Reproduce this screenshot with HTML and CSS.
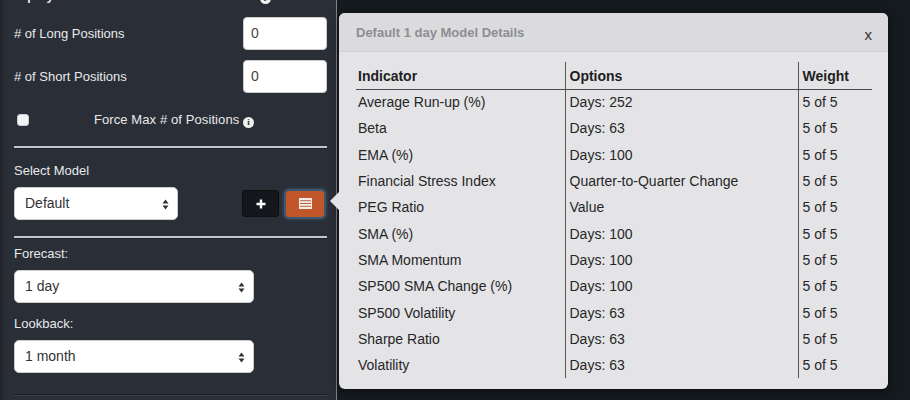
FILE: index.html
```html
<!DOCTYPE html>
<html>
<head>
<meta charset="utf-8">
<link rel="stylesheet" href="styles.css">
</head>
<body>
<div class="page">
  <aside class="sidebar">
    <div class="title">Equity Selection from Forecast Results <span class="info dark">i</span></div>
    <div class="row first">
      <label class="lbl">#&nbsp;of Long Positions</label>
      <div class="num">0</div>
    </div>
    <div class="row second">
      <label class="lbl">#&nbsp;of Short Positions</label>
      <div class="num">0</div>
    </div>
    <div class="check-row">
      <span class="checkbox"></span>
      <span class="check-text">Force Max # of Positions <span class="info">i</span></span>
    </div>
    <div class="rule"></div>
    <div class="lbl block">Select Model</div>
    <div class="model-row">
      <div class="select short">Default<svg class="caret" width="7" height="11" viewBox="0 0 7 11"><path d="M3.5 0.5 L6.5 4.5 H0.5 Z M3.5 10.5 L6.5 6.5 H0.5 Z" fill="#333"/></svg></div>
      <div class="btns">
        <button class="btn btn-dark"><svg width="10" height="10" viewBox="0 0 10 10"><path d="M3.8 0.5 H6.2 V3.8 H9.5 V6.2 H6.2 V9.5 H3.8 V6.2 H0.5 V3.8 H3.8 Z" fill="#fff"/></svg></button>
        <button class="btn btn-orange"><svg width="13" height="11" viewBox="0 0 13 11"><rect x="0" y="0" width="13" height="11" fill="#f6ede6"/><rect x="1" y="2.2" width="11" height="1" fill="#b9643e"/><rect x="1" y="5" width="11" height="1" fill="#b9643e"/><rect x="1" y="7.8" width="11" height="1" fill="#b9643e"/></svg></button>
      </div>
    </div>
    <div class="rule second-rule"></div>
    <div class="lbl block forecast">Forecast:</div>
    <div class="select wide">1 day<svg class="caret" width="7" height="11" viewBox="0 0 7 11"><path d="M3.5 0.5 L6.5 4.5 H0.5 Z M3.5 10.5 L6.5 6.5 H0.5 Z" fill="#333"/></svg></div>
    <div class="lbl block lookback">Lookback:</div>
    <div class="select wide">1 month<svg class="caret" width="7" height="11" viewBox="0 0 7 11"><path d="M3.5 0.5 L6.5 4.5 H0.5 Z M3.5 10.5 L6.5 6.5 H0.5 Z" fill="#333"/></svg></div>
    <div class="bottom-rule"></div>
  </aside>

  <div class="popover">
    <div class="pop-head">
      <span class="pop-title">Default 1 day Model Details</span>
      <span class="close">x</span>
    </div>
    <div class="pop-body">
      <table class="details">
        <thead>
          <tr><th class="c1">Indicator</th><th class="c2">Options</th><th class="c3">Weight</th></tr>
        </thead>
        <tbody>
          <tr><td>Average Run-up (%)</td><td>Days: 252</td><td>5 of 5</td></tr>
          <tr><td>Beta</td><td>Days: 63</td><td>5 of 5</td></tr>
          <tr><td>EMA (%)</td><td>Days: 100</td><td>5 of 5</td></tr>
          <tr><td>Financial Stress Index</td><td>Quarter-to-Quarter Change</td><td>5 of 5</td></tr>
          <tr><td>PEG Ratio</td><td>Value</td><td>5 of 5</td></tr>
          <tr><td>SMA (%)</td><td>Days: 100</td><td>5 of 5</td></tr>
          <tr><td>SMA Momentum</td><td>Days: 100</td><td>5 of 5</td></tr>
          <tr><td>SP500 SMA Change (%)</td><td>Days: 100</td><td>5 of 5</td></tr>
          <tr><td>SP500 Volatility</td><td>Days: 63</td><td>5 of 5</td></tr>
          <tr><td>Sharpe Ratio</td><td>Days: 63</td><td>5 of 5</td></tr>
          <tr><td>Volatility</td><td>Days: 63</td><td>5 of 5</td></tr>
        </tbody>
      </table>
    </div>
    <span class="arrow"></span>
  </div>
</div>
</body>
</html>
```

FILE: styles.css
```css
* { box-sizing: border-box; }
html, body {
  margin: 0;
  padding: 0;
  width: 910px;
  height: 400px;
  overflow: hidden;
  background: #151a1f;
  font-family: "Liberation Sans", Arial, Helvetica, sans-serif;
}
.page {
  position: relative;
  width: 910px;
  height: 400px;
  display: flex;
}
.sidebar {
  width: 337px;
  height: 430px;
  margin-top: -13px;
  background: #2a2f37;
  border-left: 3px solid #22262c;
  border-right: 1px solid #7e848c;
  padding: 0 9px 0 11px;
  display: flex;
  flex-direction: column;
  color: #e6e7e9;
  font-size: 13px;
}
.title {
  height: 18px;
  line-height: 18px;
  font-weight: bold;
  color: #e4e5e7;
}
.info {
  display: inline-block;
  width: 11px;
  height: 11px;
  border-radius: 50%;
  background: #f0f0f0;
  color: #2a2f37;
  font-size: 9px;
  font-weight: bold;
  line-height: 11px;
  text-align: center;
  vertical-align: -1px;
  font-family: "Liberation Serif", serif;
}
.row {
  display: flex;
  align-items: center;
  justify-content: space-between;
  height: 33px;
}
.row.first { margin-top: 12px; }
.row.second { margin-top: 10px; }
.lbl {
  font-size: 13px;
  line-height: 18px;
  color: #e8e9eb;
}
.num {
  width: 84px;
  height: 33px;
  background: #fff;
  border: 1px solid #ccc;
  border-radius: 4px;
  color: #444;
  font-size: 14px;
  line-height: 31px;
  padding-left: 7px;
}
.check-row {
  display: flex;
  align-items: center;
  height: 24px;
  margin-top: 15px;
}
.checkbox {
  width: 12px;
  height: 12px;
  margin-left: 3px;
  border-radius: 3px;
  background: #f2f3f5;
  border: 1px solid #c9ccd0;
}
.check-text {
  flex: 1;
  text-align: center;
  font-size: 13px;
  color: #e8e9eb;
  padding-right: 8px;
  letter-spacing: 0.1px;
}
.rule {
  height: 2px;
  background: #c3c7cc;
  margin-top: 14px;
  box-shadow: 0 1px 0 #20242a;
}
.block { margin-top: 14px; }
.model-row {
  display: flex;
  align-items: center;
  justify-content: space-between;
  margin-top: 7px;
}
.select {
  position: relative;
  height: 33px;
  background: #fff;
  border: 1px solid #ccc;
  border-radius: 5px;
  color: #333;
  font-size: 14px;
  line-height: 31px;
  padding-left: 10px;
}
.select.short { width: 164px; }
.select.wide { width: 240px; margin-top: 7px; }
.caret {
  position: absolute;
  right: 8px;
  top: 11px;
}
.btns {
  display: flex;
  align-items: center;
  gap: 7px;
}
.btn {
  border: none;
  padding: 0;
  display: flex;
  align-items: center;
  justify-content: center;
  border-radius: 3px;
  cursor: pointer;
}
.btn-dark {
  width: 37px;
  height: 27px;
  background: #14171b;
  border: 1px solid #0c0e10;
}
.btn-orange {
  width: 38px;
  height: 26px;
  background: #c0562a;
  margin-right: 3px;
  box-shadow: 0 0 0 2px #3f5870, 0 0 3px 3px rgba(80, 120, 160, 0.35);
}
.second-rule { margin-top: 16px; }
.forecast { margin-top: 7px; }
.lookback { margin-top: 12px; }
.bottom-rule {
  height: 2px;
  margin-top: 21px;
  background: #3a4049;
  border-top: 1px solid #1d2126;
}

/* popover */
.popover {
  position: absolute;
  left: 339px;
  top: 13px;
  width: 549px;
  height: 376px;
  background: #e4e4e7;
  border-radius: 6px;
  box-shadow: 0 2px 8px rgba(0, 0, 0, 0.5);
}
.pop-head {
  height: 39px;
  background: #dbdbdd;
  border-radius: 6px 6px 0 0;
  border-bottom: 1px solid #d2d2d5;
  display: flex;
  align-items: center;
  justify-content: space-between;
  padding: 0 16px 0 17px;
}
.pop-title {
  font-size: 13px;
  font-weight: bold;
  color: #8d8e92;
}
.close {
  font-size: 15px;
  color: #333;
  margin-top: 4px;
}
.pop-body {
  padding: 10px 16px 0 17px;
}
.details {
  width: 516px;
  border-collapse: collapse;
  font-size: 14px;
  color: #262626;
}
.details th {
  text-align: left;
  font-weight: bold;
  height: 27px;
  padding: 1px 0 0 2px;
  border-bottom: 1px solid #4a4a4a;
  color: #1e1e1e;
}
.details td {
  height: 26.3px;
  padding: 0 0 0 2px;
}
.details th:nth-child(2), .details th:nth-child(3),
.details td:nth-child(2), .details td:nth-child(3) {
  border-left: 1px solid #555;
  padding-left: 4px;
}
.details .c1 { width: 209px; }
.details .c2 { width: 233px; }
.details .c3 { width: 74px; }
.arrow {
  position: absolute;
  left: -9px;
  top: 179px;
  width: 0;
  height: 0;
  border-top: 9px solid transparent;
  border-bottom: 9px solid transparent;
  border-right: 9px solid #e4e4e7;
}
```
